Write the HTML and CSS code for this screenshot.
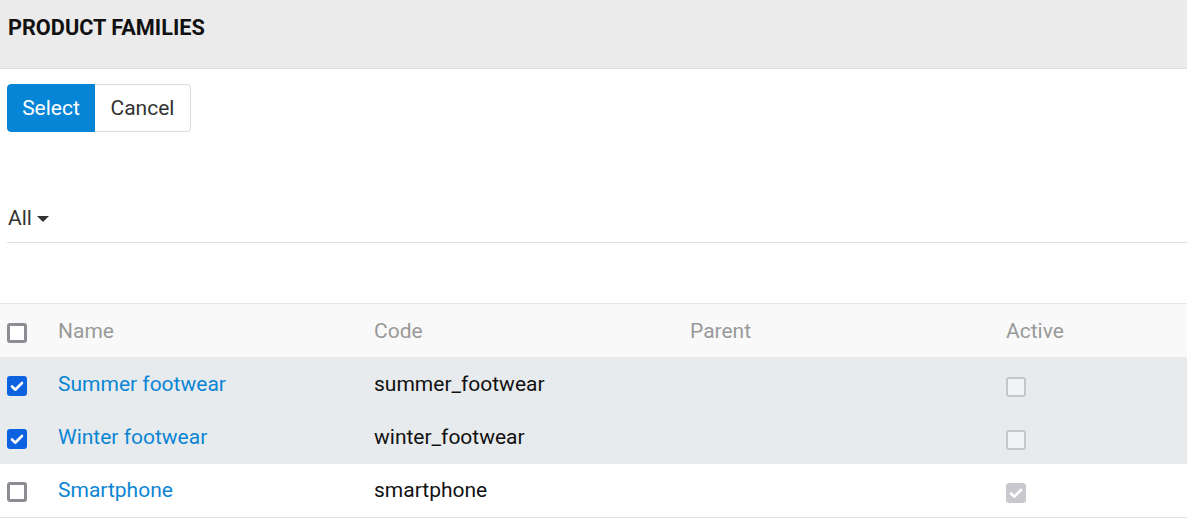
FILE: index.html
```html
<!DOCTYPE html>
<html>
<head>
<meta charset="utf-8">
<link rel="stylesheet" href="styles.css">
</head>
<body>
<header class="topbar"><h1 class="title">PRODUCT FAMILIES</h1></header>
<div class="actions">
  <button class="btn btn-primary">Select</button><button class="btn btn-default">Cancel</button>
</div>
<div class="filter">
  <span class="filter-label">All</span><span class="caret"></span>
</div>
<div class="grid">
  <div class="row head">
    <div class="cell check"><span class="cb"></span></div>
    <div class="cell">Name</div>
    <div class="cell">Code</div>
    <div class="cell">Parent</div>
    <div class="cell">Active</div>
  </div>
  <div class="row selected">
    <div class="cell check"><span class="cb checked"><svg viewBox="0 0 20 20"><path d="M5 10.5l3.2 3.2L15 7" /></svg></span></div>
    <div class="cell"><a class="link">Summer footwear</a></div>
    <div class="cell code">summer_footwear</div>
    <div class="cell"></div>
    <div class="cell"><span class="cb disabled"></span></div>
  </div>
  <div class="row selected">
    <div class="cell check"><span class="cb checked"><svg viewBox="0 0 20 20"><path d="M5 10.5l3.2 3.2L15 7" /></svg></span></div>
    <div class="cell"><a class="link">Winter footwear</a></div>
    <div class="cell code">winter_footwear</div>
    <div class="cell"></div>
    <div class="cell"><span class="cb disabled"></span></div>
  </div>
  <div class="row">
    <div class="cell check"><span class="cb"></span></div>
    <div class="cell"><a class="link">Smartphone</a></div>
    <div class="cell code">smartphone</div>
    <div class="cell"></div>
    <div class="cell"><span class="cb disabled checked-disabled"><svg viewBox="0 0 20 20"><path d="M5 10.5l3.2 3.2L15 7" /></svg></span></div>
  </div>
</div>
</body>
</html>
```
FILE: styles.css
```css
* { box-sizing: border-box; }
html, body { margin: 0; padding: 0; background: #fff; }
body {
  font-family: Roboto, "Liberation Sans", sans-serif;
  color: #333;
  width: 1187px;
  height: 530px;
  overflow: hidden;
}
.topbar {
  height: 69px;
  background: #ebebeb;
  border-bottom: 1px solid #dedede;
  padding: 0 8px;
  display: flex;
  align-items: center;
}
.title {
  margin: 0;
  font-size: 21.7px;
  font-weight: 700;
  color: #111;
  padding-bottom: 14px;
}
.actions {
  padding: 15px 7px 0;
  display: flex;
  height: 63px;
  align-items: flex-start;
}
.btn {
  font-family: Roboto, "Liberation Sans", sans-serif;
  font-size: 21px;
  height: 48px;
  margin: 0;
  cursor: pointer;
}
.btn-primary {
  background: #0684d5;
  color: #fff;
  border: 1px solid #0684d5;
  border-radius: 4px 0 0 4px;
  width: 88px;
}
.btn-default {
  background: #fff;
  color: #333;
  border: 1px solid #dcdcdc;
  border-left: none;
  border-radius: 0 4px 4px 0;
  width: 96px;
}
.filter {
  margin: 63px 0 0 7px;
  height: 48px;
  border-bottom: 1px solid #dfdfdf;
  display: flex;
  align-items: center;
  padding: 0 0 1px 1px;
}
.filter-label { font-size: 21px; color: #333; }
.caret {
  width: 0; height: 0;
  border-left: 6px solid transparent;
  border-right: 6px solid transparent;
  border-top: 6px solid #333;
  margin-left: 5px;
  margin-top: 2px;
}
.grid {
  margin-top: 60px;
  border-top: 1px solid #e6e6e6;
  border-bottom: 1px solid #e3e3e3;
}
.row {
  display: grid;
  grid-template-columns: 50px 316px 316px 316px 1fr;
  height: 53.3px;
  align-items: center;
}
.row.head { background: #f9f9f9; height: 53px; }
.row.head .cell { color: #999; }
.row.selected { background: #e8ebed; }
.cell { padding-left: 8px; font-size: 21px; color: #111; }
.cell.check { padding-left: 7px; display: flex; }
.link { color: #0b85d4; text-decoration: none; }
.cb {
  display: inline-block;
  width: 20px; height: 20px;
  border: 3px solid #8c8c93;
  border-radius: 3px;
  background: #fff;
  position: relative;
  vertical-align: middle;
}
.cell.check .cb { margin-top: 4px; }
.cb svg { position: absolute; left: -3px; top: -3px; width: 20px; height: 20px; }
.cb svg path { fill: none; stroke: #fff; stroke-width: 2.6; stroke-linecap: round; stroke-linejoin: round; }
.cb.checked { background: #0c62df; border-color: #0c62df; }
.cb.disabled { border: 2.5px solid #c5c6cc; background: #f3f4f5; margin-top: 5px; }
.cb.checked-disabled { background: #c8c9ce; border-color: #c8c9ce; }
.cb.disabled svg { left: -2.5px; top: -2.5px; }
```
